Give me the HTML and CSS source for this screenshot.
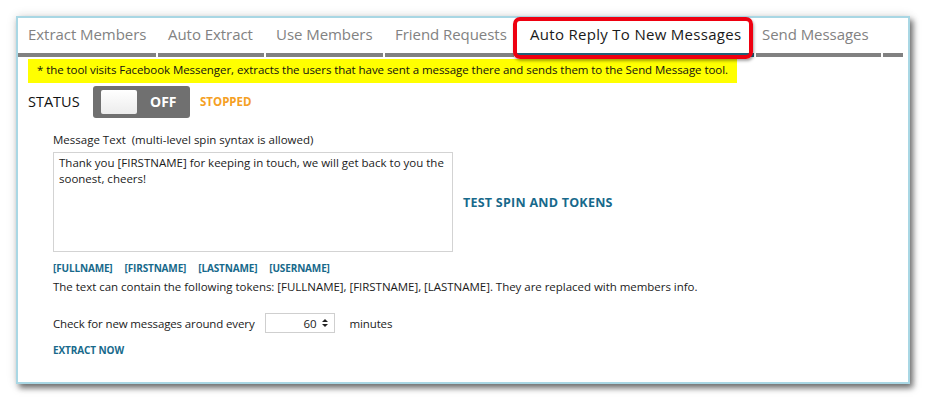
FILE: index.html
```html
<!DOCTYPE html>
<html>
<head>
<meta charset="utf-8">
<link rel="stylesheet" href="styles.css">
</head>
<body>
<div class="window">
  <div class="tabs">
    <div class="tab t1">Extract Members</div>
    <div class="tab t2">Auto Extract</div>
    <div class="tab t3">Use Members</div>
    <div class="tab t4">Friend Requests</div>
    <div class="tab t5 active">Auto Reply To New Messages<span class="highlight"></span></div>
    <div class="tab t6">Send Messages</div>
    <div class="tab t7"></div>
  </div>
  <div class="content">
    <div class="notice">* the tool visits Facebook Messenger, extracts the users that have sent a message there and sends them to the Send Message tool.</div>
    <div class="status-row">
      <span class="status-label">STATUS</span>
      <div class="toggle"><span class="knob"></span><span class="off">OFF</span></div>
      <span class="stopped">STOPPED</span>
    </div>
    <div class="form">
      <div class="label">Message Text&nbsp; (multi-level spin syntax is allowed)</div>
      <div class="msg-row">
        <div class="textarea">Thank you [FIRSTNAME] for keeping in touch, we will get back to you the soonest, cheers!</div>
        <a class="link test">TEST SPIN AND TOKENS</a>
      </div>
      <div class="tokens">
        <a class="link tok">[FULLNAME]</a>
        <a class="link tok">[FIRSTNAME]</a>
        <a class="link tok">[LASTNAME]</a>
        <a class="link tok">[USERNAME]</a>
      </div>
      <div class="info">The text can contain the following tokens: [FULLNAME], [FIRSTNAME], [LASTNAME]. They are replaced with members info.</div>
      <div class="check-row">
        <span>Check for new messages around every</span>
        <div class="spinner"><span class="val">60</span>
          <svg class="arrows" width="8" height="12" viewBox="0 0 8 12"><path d="M1 5 L4 2 L7 5 Z" fill="#222"/><path d="M1 7 L4 10 L7 7 Z" fill="#222"/></svg>
        </div>
        <span>minutes</span>
      </div>
      <a class="link extract">EXTRACT NOW</a>
    </div>
  </div>
</div>
</body>
</html>
```

FILE: styles.css
```css
* { box-sizing: border-box; }
html, body { margin: 0; padding: 0; background: #fff; }
body {
  font-family: "Open Sans", "Noto Sans", sans-serif;
  color: #1b1b1b;
  width: 925px;
  height: 400px;
  overflow: hidden;
}
.window {
  margin: 16px 0 0 16px;
  width: 894px;
  height: 368px;
  border: 2px solid #a9d7e4;
  background: #fff;
  box-shadow: 3px 4px 6px rgba(0,0,0,0.55), 0 0 10px rgba(0,0,0,0.12);
}
.tabs {
  display: flex;
  gap: 2px;
  height: 39px;
}
.tab {
  position: relative;
  font-size: 15px;
  letter-spacing: -0.05px;
  color: #828282;
  padding: 6px 0 0 10px;
  border-bottom: 4px solid #818181;
  white-space: nowrap;
}
.t1 { width: 138px; }
.t2 { width: 106px; }
.t3 { width: 117px; }
.t4 { width: 129px; }
.t5 { width: 238px; padding-left: 14px; }
.t6 { width: 125px; padding-left: 6px; }
.t7 { width: 20px; }
.tab.active {
  color: #1a1a1a;
  letter-spacing: 0.3px;
  border-bottom-color: #1e5f78;
}
.highlight {
  position: absolute;
  left: -3px;
  top: -1px;
  width: 240px;
  height: 42px;
  border: 4px solid #ee0010;
  border-radius: 7px;
  box-shadow: 1px 2px 3px rgba(0,0,0,0.35);
}
.content {
  padding: 0 0 0 10px;
}
.notice {
  display: inline-block;
  width: 709px;
  height: 24px;
  background: #ffff00;
  font-size: 11.5px;
  letter-spacing: -0.06px;
  padding: 3px 0 0 9px;
  color: #111;
}
.status-row {
  display: flex;
  align-items: center;
  height: 33px;
  margin-top: 2px;
}
.status-label {
  font-size: 14.5px;
  width: 65px;
  color: #111;
}
.toggle {
  width: 97px;
  height: 32px;
  background: #707070;
  border-radius: 3px;
  display: flex;
  align-items: center;
  padding-left: 8px;
}
.knob {
  width: 36px;
  height: 24px;
  background: linear-gradient(#ffffff, #ececec);
  border-radius: 2px;
}
.off {
  color: #fff;
  font-weight: bold;
  font-size: 14px;
  margin-left: 13px;
}
.stopped {
  color: #f5a024;
  font-weight: bold;
  font-size: 11.5px;
  margin-left: 10px;
}
.form {
  padding-left: 25px;
  margin-top: 14px;
}
.label {
  font-size: 11.5px;
  letter-spacing: 0;
  height: 20px;
}
.msg-row {
  display: flex;
  align-items: center;
}
.textarea {
  width: 400px;
  height: 100px;
  border: 1px solid #d3d3d3;
  font-size: 11.5px;
  letter-spacing: 0;
  line-height: 16px;
  padding: 2px 5px;
}
.link {
  color: #17698b;
  font-weight: bold;
  text-decoration: none;
}
.test {
  font-size: 12.5px;
  margin-left: 10px;
  letter-spacing: 0.25px;
}
.tokens {
  display: flex;
  gap: 12px;
  margin-top: 9px;
  height: 14px;
}
.tok {
  font-size: 10px;
  letter-spacing: -0.15px;
}
.info {
  font-size: 11.5px;
  letter-spacing: -0.03px;
  margin-top: 4px;
}
.check-row {
  display: flex;
  align-items: center;
  font-size: 11.5px;
  letter-spacing: -0.13px;
  margin-top: 19px;
}
.spinner {
  width: 70px;
  height: 20px;
  border: 1px solid #cfcfcf;
  margin: 0 15px 0 10px;
  display: flex;
  align-items: center;
  justify-content: flex-end;
  padding-right: 5px;
  font-size: 11.5px;
}
.val { margin-right: 4px; }
.extract {
  display: block;
  margin-top: 10px;
  font-size: 10px;
  letter-spacing: -0.1px;
}
```
